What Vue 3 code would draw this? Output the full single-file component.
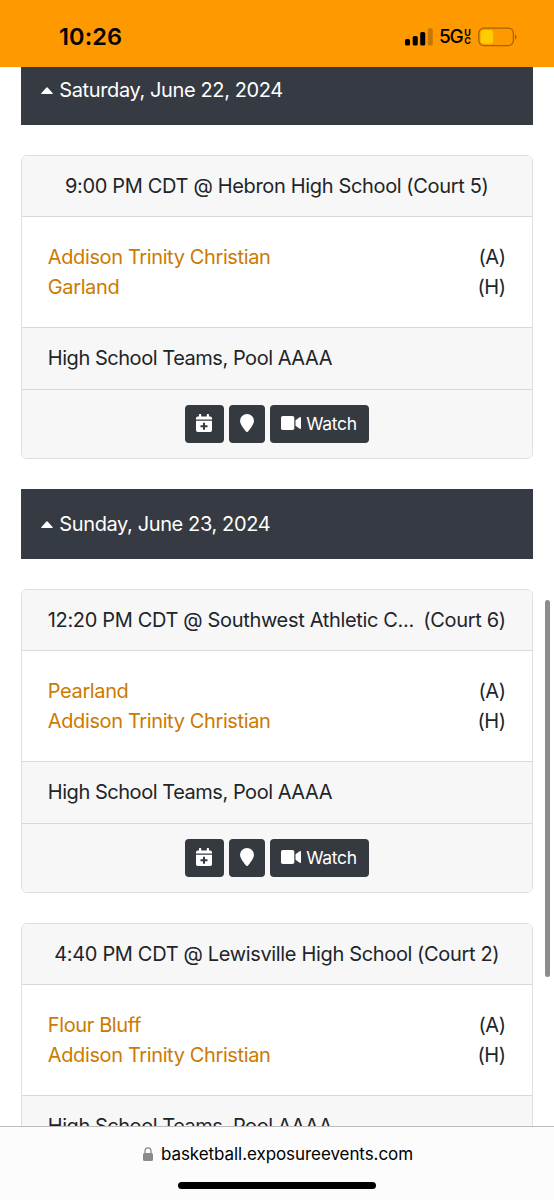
<template>
    <div class="screen">
        <header class="status-bar">
            <span class="clock">10:26</span>
            <div class="status-icons">
                <svg class="signal" viewBox="0 0 28 18" aria-hidden="true">
                    <rect x="0" y="11" width="5" height="6.5" rx="1.6" />
                    <rect x="7.7" y="8" width="5" height="9.5" rx="1.6" />
                    <rect x="15.2" y="4" width="5" height="13.5" rx="1.6" />
                    <rect x="22.8" y="0.3" width="5" height="17.2" rx="1.6" opacity="0.22" />
                </svg>
                <span class="network">5G</span>
                <span class="network-sub"><span>U</span><span>C</span></span>
                <svg class="battery" viewBox="0 0 40 20" aria-hidden="true">
                    <rect x="0.8" y="1.2" width="34.6" height="17.4" rx="5" fill="none" stroke="#a86500" stroke-width="1.3" />
                    <rect x="2.6" y="3" width="12.6" height="13.8" rx="3" fill="#ffcc00" />
                    <path d="M37 7.5c2 .6 2 4.400 0 5z" fill="#a86500" />
                </svg>
            </div>
        </header>

        <main class="page">
            <section v-for="day in days" :key="day.date" class="day">
                <h2 class="day-title">
                    <svg class="caret" viewBox="0 0 12 7" aria-hidden="true">
                        <path d="M.7 7Q-.3 7 .5 6L5.200.7Q6 0 6.800.7L11.500 6Q12.300 7 11.300 7z" />
                    </svg>
                    <span>{{ day.date }}</span>
                </h2>

                <article v-for="game in day.games" :key="game.time" class="card">
                    <div class="card-header" :class="{ long: game.long }">
                        <span>{{ game.time }} @ {{ game.venue }}</span>
                        <span>({{ game.court }})</span>
                    </div>
                    <div class="card-body">
                        <div class="team">
                            <a>{{ game.away }}</a>
                            <span>(A)</span>
                        </div>
                        <div class="team">
                            <a>{{ game.home }}</a>
                            <span>(H)</span>
                        </div>
                    </div>
                    <div class="card-footer">High School Teams, Pool AAAA</div>
                    <div class="card-actions">
                        <button class="btn btn-calendar" type="button" aria-label="Calendar">
                            <svg viewBox="0 0 16 18" aria-hidden="true">
                                <path d="M0 5.400V4.300Q0 2.500 1.800 2.500H3V1a1 1 0 0 1 2.200 0v1.500h5.600V1a1 1 0 0 1 2.200 0v1.500h1.200q1.800 0 1.800 1.800V5.400z" />
                                <path fill-rule="evenodd" d="M0 6.700h16v9.600q0 1.700-1.800 1.700H1.800Q0 18 0 16.300zM7 8.700v2.500H4.500v2H7v2.500h2v-2.500h2.500v-2H9V8.700z" />
                            </svg>
                        </button>
                        <button class="btn btn-map" type="button" aria-label="Map">
                            <svg viewBox="0 0 14 18" aria-hidden="true">
                                <path d="M7 0a7 6.800 0 0 1 7 6.800c0 3.200-3.900 8.200-6 10.800q-1 .9-2 0C3.900 15 0 10 0 6.800A7 6.800 0 0 1 7 0z" />
                            </svg>
                        </button>
                        <button class="btn btn-watch" type="button">
                            <svg viewBox="0 0 20 14" aria-hidden="true">
                                <rect width="13.300" height="14" rx="1.800" />
                                <path d="M14.500 4.300 18.300 1.400Q20 .4 20 2v10q0 1.600-1.700.6L14.500 9.700z" />
                            </svg>
                            <span>Watch</span>
                        </button>
                    </div>
                </article>
            </section>
        </main>

        <div class="scrollbar"></div>

        <footer class="browser-bar">
            <div class="address">
                <svg class="lock" viewBox="0 0 10 14" aria-hidden="true">
                    <path d="M2 7V4.200a3 3.300 0 0 1 6 0V7" fill="none" stroke="#8a8a8e" stroke-width="1.300" />
                    <rect y="6" width="10" height="8" rx="1.500" fill="#8a8a8e" />
                </svg>
                <span>basketball.exposureevents.com</span>
            </div>
            <div class="home-indicator"></div>
        </footer>
    </div>
</template>

<script setup>
const days = [
    {
        date: 'Saturday, June 22, 2024',
        games: [
            {
                time: '9:00 PM CDT',
                venue: 'Hebron High School',
                court: 'Court 5',
                away: 'Addison Trinity Christian',
                home: 'Garland'
            }
        ]
    },
    {
        date: 'Sunday, June 23, 2024',
        games: [
            {
                time: '12:20 PM CDT',
                venue: 'Southwest Athletic C...',
                court: 'Court 6',
                long: true,
                away: 'Pearland',
                home: 'Addison Trinity Christian'
            },
            {
                time: '4:40 PM CDT',
                venue: 'Lewisville High School',
                court: 'Court 2',
                away: 'Flour Bluff',
                home: 'Addison Trinity Christian'
            }
        ]
    }
];
</script>

<style>
html,
body {
    margin: 0;
    background: #fff;
}
</style>

<style scoped>
.screen {
    position: relative;
    display: flex;
    flex-direction: column;
    width: 554px;
    height: 1200px;
    overflow: hidden;
    background: #fff;
    color: #212529;
    font-family: Inter, "Liberation Sans", sans-serif;
    font-size: 20px;
    line-height: 30px;
    letter-spacing: -0.38px;
}

.status-bar {
    display: flex;
    justify-content: space-between;
    align-items: center;
    flex: none;
    box-sizing: border-box;
    height: 67px;
    padding: 7px 36px 0 59px;
    background: #ff9900;
    color: #000;
}

.clock {
    font-size: 23.5px;
    font-weight: 600;
    letter-spacing: 0.1px;
}

.status-icons {
    display: flex;
    align-items: center;
    letter-spacing: 0;
}

.signal {
    width: 28px;
    height: 18px;
}

.network {
    margin-left: 6px;
    font-size: 19px;
    font-weight: 500;
    letter-spacing: -1.3px;
}

.network-sub {
    display: flex;
    flex-direction: column;
    margin-left: 2px;
    font-size: 9px;
    font-weight: 700;
    line-height: 8px;
}

.battery {
    width: 40px;
    height: 20px;
    margin-left: 7px;
}

.page {
    flex: 1;
    min-height: 0;
    overflow: hidden;
    padding: 0 21.3px;
}

.day:first-child {
    margin-top: -12px;
}

.day-title {
    display: flex;
    align-items: center;
    box-sizing: border-box;
    height: 70px;
    margin: 0 0 30px;
    padding-left: 20px;
    background: #363a42;
    color: #fff;
    font-size: 20px;
    font-weight: 400;
}

.caret {
    width: 12px;
    height: 7px;
    margin-right: 6px;
    fill: #fff;
}

.card {
    box-sizing: border-box;
    height: 304px;
    margin-bottom: 30px;
    border: 1.5px solid #dfdfdf;
    border-radius: 6px;
    overflow: hidden;
}

.card-header,
.card-footer,
.card-actions {
    box-sizing: border-box;
    background: #f7f7f7;
}

.card-header {
    display: flex;
    justify-content: center;
    gap: 5px;
    height: 61px;
    padding: 15px 26px 0 25.5px;
    border-bottom: 1px solid #d9d9d9;
    letter-spacing: -0.34px;
    white-space: nowrap;
}

.card-header.long {
    justify-content: space-between;
}

.card-body {
    box-sizing: border-box;
    height: 110px;
    padding: 25px 26px 0 25.5px;
}

.team {
    display: flex;
    justify-content: space-between;
}

.team a {
    color: #cc7a00;
}

.card-footer {
    height: 62px;
    padding: 15px 25.5px;
    border-top: 1px solid #d9d9d9;
    letter-spacing: -0.46px;
}

.card-actions {
    display: flex;
    justify-content: center;
    gap: 5px;
    height: 70px;
    padding-top: 15px;
    border-top: 1px solid #d9d9d9;
}

.btn {
    display: flex;
    align-items: center;
    justify-content: center;
    box-sizing: border-box;
    height: 38px;
    padding: 0 1px 2px 0;
    border: none;
    border-radius: 4px;
    background: #343a40;
    color: #fff;
    font-family: inherit;
    font-size: 17.5px;
    letter-spacing: -0.3px;
}

.btn svg {
    fill: #fff;
}

.btn-calendar {
    width: 39px;
}

.btn-calendar svg {
    width: 16px;
    height: 18px;
}

.btn-map {
    width: 36px;
}

.btn-map svg {
    width: 14px;
    height: 18px;
}

.btn-watch {
    width: 99px;
}

.btn-watch svg {
    width: 20px;
    height: 14px;
    margin-right: 5px;
}

.scrollbar {
    position: absolute;
    top: 600px;
    right: 4px;
    width: 5px;
    height: 377px;
    border-radius: 3px;
    background: #8c8c8c;
}

.browser-bar {
    display: flex;
    flex-direction: column;
    align-items: center;
    flex: none;
    box-sizing: border-box;
    height: 74px;
    padding-top: 12px;
    border-top: 1px solid #bdbdbf;
    background: #fcfcfd;
    color: #000;
    font-size: 17px;
    letter-spacing: -0.07px;
}

.address {
    display: flex;
    align-items: center;
    padding-left: 2px;
}

.lock {
    width: 10px;
    height: 14px;
    margin-right: 8px;
}

.home-indicator {
    width: 198px;
    height: 7px;
    margin-top: 13px;
    border-radius: 4px;
    background: #000;
}
</style>
